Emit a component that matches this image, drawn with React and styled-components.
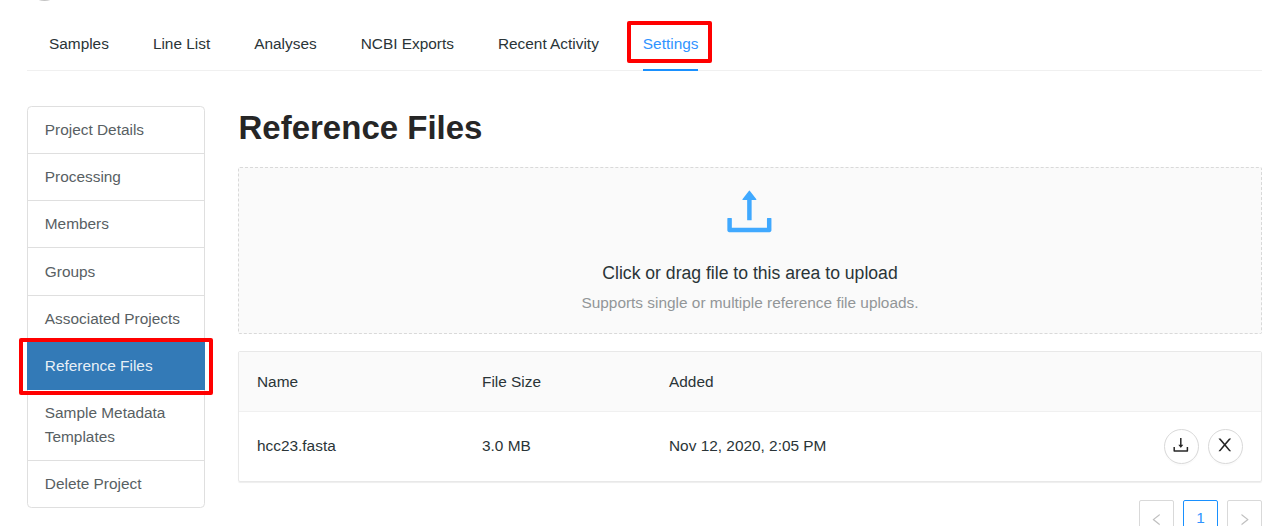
import React from "react";
import styled, { createGlobalStyle, css } from "styled-components";

const GlobalStyle = createGlobalStyle`
  *, *::before, *::after { box-sizing: border-box; }
  html, body { margin: 0; background: #fff; overflow: hidden; }
  body {
    font-family: "Liberation Sans", Arial, sans-serif;
    font-size: 15.4px;
    line-height: 24.2px;
    color: #2a3437;
  }
`;

const Page = styled.div`
  height: 526px;
  padding: 0 4px 0 27px;
  overflow: hidden;
`;

const Header = styled.header`
  height: 18px;
  padding-left: 8px;
`;

const AvatarEdge = styled.svg`
  display: block;
`;

const Tabs = styled.nav`
  display: flex;
  gap: 44px;
  height: 53px;
  padding-left: 22px;
  border-bottom: 1px solid #f0f0f0;
`;

const Tab = styled.a`
  position: relative;
  height: 53px;
  padding-top: 14px;
  white-space: nowrap;
  color: ${(p) => (p.$active ? "#3094ff" : "inherit")};
  ${(p) => p.$active && css`border-bottom: 2px solid #1890ff;`}
`;

const Highlight = styled.span`
  position: absolute;
  z-index: 2;
  border: 4px solid #ff0000;
  border-radius: 2px;
  pointer-events: none;
`;

const TabHighlight = styled(Highlight)`
  top: 3px;
  left: -16px;
  width: 85px;
  height: 42px;
`;

const MenuHighlight = styled(Highlight)`
  top: -4.6px;
  left: -8px;
  width: 194px;
  height: 57px;
`;

const Body = styled.div`
  display: grid;
  grid-template-columns: 178px 1fr;
  gap: 33px;
  align-items: start;
  padding-top: 35px;
`;

const Menu = styled.ul`
  margin: -0.2px 0 0;
  padding: 0;
  list-style: none;
  border: 1px solid #dfdfdf;
  border-radius: 4.4px;
`;

const MenuItem = styled.li`
  position: relative;
  padding: 11.15px 16.8px 10.85px;
  color: #586063;
  & + & { border-top: 1px solid #dfdfdf; }
  ${(p) => p.$active && css`
    && {
      margin: 0 -1px;
      padding: 11px 17.8px 11.8px;
      color: rgba(255, 255, 255, 0.9);
      background: #337ab7;
      border-top-color: #337ab7;
    }
    && + li {
      padding-top: 11px;
      padding-bottom: 11px;
      border-top: 0;
    }
  `}
`;

const Content = styled.main`
  min-width: 0;
`;

const Title = styled.h1`
  margin: 0;
  padding: 1px 0 0 0.5px;
  height: 61px;
  font-size: 33px;
  line-height: 42px;
  font-weight: 700;
  color: #262626;
`;

const DropZone = styled.div`
  display: flex;
  flex-direction: column;
  align-items: center;
  height: 167px;
  padding-top: 17px;
  background: #fafafa;
  border: 1px dashed #d9d9d9;
  border-radius: 2px;
`;

const Icon = styled.svg`
  display: block;
  flex: none;
  width: ${(p) => p.$size}px;
  height: ${(p) => p.$size}px;
  fill: currentColor;
`;

const DropIcon = styled.div`
  padding-right: 0.8px;
  color: #40a9ff;
  height: 75px;
`;

const DropText = styled.div`
  font-size: 17.6px;
  line-height: 27.6px;
`;

const DropHint = styled.div`
  margin-top: 3px;
  color: #929698;
`;

const Table = styled.section`
  height: 131px;
  margin-top: 17px;
  border: 1px solid #e8e8e8;
  border-radius: 2px;
  box-shadow: 0 1px 1px rgba(0, 0, 0, 0.07);
`;

const Row = styled.div`
  display: grid;
  grid-template-columns: 225px 187px 1fr auto;
  align-items: center;
  height: ${(p) => (p.$head ? 60 : 69)}px;
  padding: 0 18px;
  ${(p) => p.$head && css`
    padding-top: 2px;
    background: #fafafa;
    border-bottom: 1px solid #f0f0f0;
  `}
`;

const Actions = styled.div`
  display: flex;
  gap: 9px;
`;

const RoundButton = styled.button`
  display: flex;
  align-items: center;
  justify-content: center;
  width: 35px;
  height: 35px;
  padding: 0 0.5px 3px 0;
  color: rgba(0, 0, 0, 0.85);
  background: #fff;
  border: 1px solid #d9d9d9;
  border-radius: 50%;
  box-shadow: 0 2px 0 rgba(0, 0, 0, 0.015);
`;

const Pagination = styled.nav`
  display: flex;
  justify-content: flex-end;
  gap: 9px;
  margin-top: 18px;
`;

const PageButton = styled.button`
  display: flex;
  align-items: center;
  justify-content: center;
  width: 35px;
  height: 35px;
  padding: ${(p) => (p.$active ? "1px 0 0" : "4px 0 0")};
  font: inherit;
  color: ${(p) => (p.$active ? "#3094ff" : "rgba(0, 0, 0, 0.25)")};
  background: #fff;
  border: 1px solid ${(p) => (p.$active ? "#1890ff" : "#d9d9d9")};
  border-radius: 2px;
`;

const paths = {
  upload:
    "M400 317.7h73.9V656c0 4.4 3.6 8 8 8h60c4.4 0 8-3.6 8-8V317.7H624c6.7 0 10.4-7.7 6.3-12.9L518.3 163a8 8 0 0 0-12.6 0l-112 141.7c-4.1 5.3-.4 13 6.3 13zM878 626h-60c-4.4 0-8 3.6-8 8v154H214V634c0-4.4-3.6-8-8-8h-60c-4.4 0-8 3.6-8 8v198c0 17.7 14.3 32 32 32h684c17.7 0 32-14.3 32-32V634c0-4.4-3.6-8-8-8z",
  download:
    "M505.7 661a8 8 0 0 0 12.6 0l112-141.7c4.1-5.2.4-12.9-6.3-12.9h-74.1V168c0-4.4-3.6-8-8-8h-60c-4.4 0-8 3.6-8 8v338.3H400c-6.7 0-10.4 7.7-6.3 12.9l112 141.8zM878 626h-60c-4.4 0-8 3.6-8 8v154H214V634c0-4.4-3.6-8-8-8h-60c-4.4 0-8 3.6-8 8v198c0 17.7 14.3 32 32 32h684c17.7 0 32-14.3 32-32V634c0-4.4-3.6-8-8-8z",
  close:
    "M563.8 512l262.5-312.9c4.4-5.2.7-13.1-6.1-13.1h-79.8c-4.7 0-9.2 2.1-12.3 5.7L511.6 449.8 295.1 191.7c-3-3.6-7.5-5.7-12.3-5.7H203c-6.8 0-10.5 7.9-6.1 13.1L459.4 512 196.9 824.9A7.95 7.95 0 0 0 203 838h79.8c4.7 0 9.2-2.1 12.3-5.7l216.5-258.1 216.5 258.1c3 3.6 7.5 5.7 12.3 5.7h79.8c6.8 0 10.5-7.9 6.1-13.1L563.8 512z",
  left:
    "M724 218.3V141c0-6.7-7.7-10.4-12.9-6.3L260.3 486.8a31.86 31.86 0 0 0 0 50.3l450.8 352.1c5.3 4.1 12.9.4 12.9-6.3v-77.3c0-4.9-2.3-9.6-6.1-12.6l-360-281 360-281.1c3.8-3 6.1-7.7 6.1-12.6z",
  right:
    "M765.7 486.8L314.9 134.7A7.97 7.97 0 0 0 302 141v77.3c0 4.9 2.3 9.6 6.1 12.6l360 281.1-360 281.1c-3.9 3-6.1 7.7-6.1 12.6V883c0 6.7 7.7 10.4 12.9 6.3l450.8-352.1a31.96 31.96 0 0 0 0-50.4z",
};

const Glyph = ({ name, size }) => (
  <Icon $size={size} viewBox="64 64 896 896" aria-hidden="true">
    <path d={paths[name]} />
  </Icon>
);

const tabs = ["Samples", "Line List", "Analyses", "NCBI Exports", "Recent Activity", "Settings"];
const menu = [
  "Project Details",
  "Processing",
  "Members",
  "Groups",
  "Associated Projects",
  "Reference Files",
  "Sample Metadata Templates",
  "Delete Project",
];

export default function App() {
  return (
    <Page>
      <GlobalStyle />
      <Header>
        <AvatarEdge width="19" height="2" viewBox="0 0 19 2" aria-hidden="true">
          <circle cx="9.5" cy="-16.5" r="17.5" fill="#c4c4c4" />
        </AvatarEdge>
      </Header>
      <Tabs>
        {tabs.map((label) => (
          <Tab key={label} $active={label === "Settings"}>
            {label}
            {label === "Settings" && <TabHighlight />}
          </Tab>
        ))}
      </Tabs>
      <Body>
        <Menu>
          {menu.map((label) => (
            <MenuItem key={label} $active={label === "Reference Files"}>
              {label}
              {label === "Reference Files" && <MenuHighlight />}
            </MenuItem>
          ))}
        </Menu>
        <Content>
          <Title>Reference Files</Title>
          <DropZone>
            <DropIcon>
              <Glyph name="upload" size={52.8} />
            </DropIcon>
            <DropText>Click or drag file to this area to upload</DropText>
            <DropHint>Supports single or multiple reference file uploads.</DropHint>
          </DropZone>
          <Table>
            <Row $head>
              <span>Name</span>
              <span>File Size</span>
              <span>Added</span>
            </Row>
            <Row>
              <span>hcc23.fasta</span>
              <span>3.0 MB</span>
              <span>Nov 12, 2020, 2:05 PM</span>
              <Actions>
                <RoundButton aria-label="Download">
                  <Glyph name="download" size={17.6} />
                </RoundButton>
                <RoundButton aria-label="Remove">
                  <Glyph name="close" size={17.6} />
                </RoundButton>
              </Actions>
            </Row>
          </Table>
          <Pagination>
            <PageButton aria-label="Previous page">
              <Glyph name="left" size={13.2} />
            </PageButton>
            <PageButton $active>1</PageButton>
            <PageButton aria-label="Next page">
              <Glyph name="right" size={13.2} />
            </PageButton>
          </Pagination>
        </Content>
      </Body>
    </Page>
  );
}
